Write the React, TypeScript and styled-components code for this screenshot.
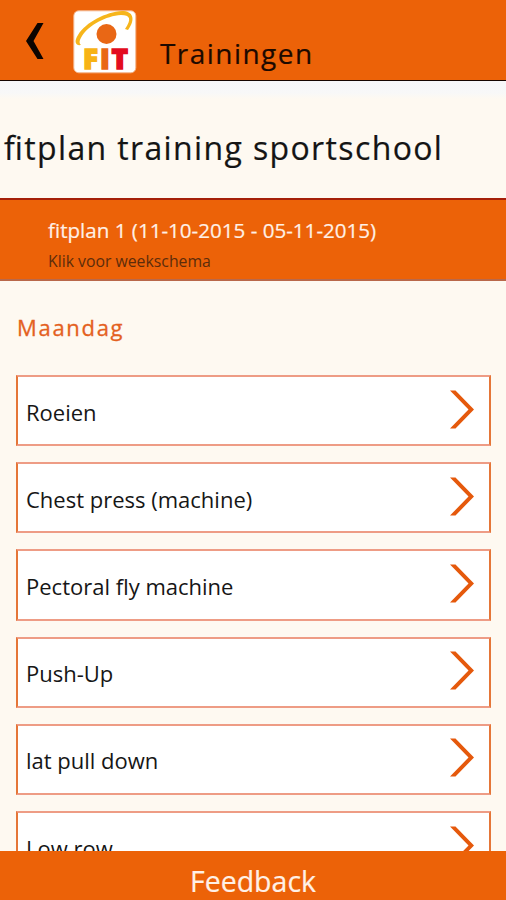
import React from "react";
import styled, { createGlobalStyle } from "styled-components";

const ORANGE = "#ec6208";

const GlobalStyle = createGlobalStyle`
  *, *::before, *::after { box-sizing: border-box; }
  body { margin: 0; background: #fef9f1; font-family: "Open Sans", "Noto Sans", sans-serif; }
`;

const Screen = styled.div`
  display: flex;
  flex-direction: column;
  height: 900px;
  overflow: hidden;
  background: #fef9f1;
`;

const Header = styled.header`
  display: flex;
  align-items: flex-start;
  flex: none;
  height: 81px;
  padding-left: 25px;
  background: ${ORANGE};
  border-bottom: 1.5px solid #160500;
`;

const BackButton = styled.button`
  display: flex;
  width: 48px;
  padding: 22px 0 0;
  border: 0;
  background: none;
`;

const Logo = styled.svg`
  flex: none;
  margin-top: 10px;
  overflow: visible;
`;

const LogoLetter = styled.text`
  font: 800 28px "Open Sans", sans-serif;
  stroke-width: 1.4;
`;

const HeaderTitle = styled.h1`
  margin: 34px 0 0 23px;
  font-size: 28px;
  line-height: 38px;
  font-weight: 400;
  letter-spacing: 1.45px;
  color: #1c0900;
  -webkit-text-stroke: 0.2px #1c0900;
`;

const Content = styled.main`
  flex: 1;
  min-height: 0;
  overflow: hidden;
`;

const PlanTitle = styled.h2`
  height: 117px;
  margin: 0;
  padding: 45px 0 0 4px;
  background: linear-gradient(#f7f7f9 0, #f8f8f8 12px, #fef9f1 18px);
  font-size: 32px;
  line-height: 44px;
  font-weight: 400;
  letter-spacing: 1.37px;
  font-feature-settings: "liga" 1;
  white-space: nowrap;
  color: #141414;
  -webkit-text-stroke: 0.2px #141414;
`;

const PlanBar = styled.section`
  height: 83px;
  padding: 15px 48px 0;
  background: ${ORANGE};
  border-top: 2px solid #a51f08;
  border-bottom: 2px solid #b9684a;
`;

const PlanName = styled.div`
  font-size: 20.6px;
  line-height: 30px;
  white-space: nowrap;
  color: #fff0e6;
  -webkit-text-stroke: 0.2px #fff0e6;
`;

const PlanHint = styled.div`
  margin-top: 5px;
  font-size: 15.8px;
  line-height: 22px;
  color: #5c2c0b;
`;

const Day = styled.h3`
  margin: 31px 0 33px 17px;
  font-size: 22px;
  line-height: 30px;
  font-weight: 400;
  letter-spacing: 1.7px;
  color: #e4611f;
  -webkit-text-stroke: 0.3px #e4611f;
`;

const List = styled.div`
  display: flex;
  flex-direction: column;
  gap: 16px;
  padding: 0 15px 0 16px;
`;

const Row = styled.div`
  display: flex;
  align-items: center;
  justify-content: space-between;
  flex: none;
  height: 71.2px;
  padding: 0 15px 0 8px;
  background: #fff;
  border: 2px solid #e57638;
  border-top-color: #ee9c85;
  border-bottom-color: #ee9c85;
`;

const RowLabel = styled.span`
  padding-top: 2px;
  font-size: 22px;
  line-height: 30px;
  color: #161616;
`;

const Chevron = styled.svg`
  flex: none;
  margin-bottom: 3px;
`;

const Footer = styled.footer`
  flex: none;
  height: 49px;
  padding-top: 10px;
  background: ${ORANGE};
  text-align: center;
  font-size: 28.5px;
  line-height: 40px;
  color: #fff0e6;
  -webkit-text-stroke: 0.2px #fff0e6;
`;

const exercises = ["Roeien", "Chest press (machine)", "Pectoral fly machine", "Push-Up", "lat pull down", "Low row"];

export default function App() {
  return (
    <Screen>
      <GlobalStyle />
      <Header>
        <BackButton aria-label="Terug">
          <svg width="20" height="38" viewBox="0 0 20 38">
            <path d="M12.5 1H18.5L8.5 19L18.5 37H12.5L1 19Z" fill="#0c0400" />
          </svg>
        </BackButton>
        <Logo width="64" height="64" viewBox="0 0 64 64">
          <rect x="0.8" y="0.8" width="62" height="62" rx="5" fill="#fff" stroke="#f3b58c" />
          <path
            d="M8 35C2 36 1 31 5 25C13 12 33 2 49 1C60 1 63 9 55 20L52 19C59 9 57 5 48 5C33 6 16 15 9 26C6 31 6 33 8 35Z"
            fill="#f6b51b"
          />
          <circle cx="33.5" cy="24" r="10" fill="#e96715" />
          <LogoLetter x="10" y="58.5" fill="#f7b315" stroke="#f7b315">F</LogoLetter>
          <LogoLetter x="27" y="58.5" fill="#e96715" stroke="#e96715">I</LogoLetter>
          <LogoLetter x="38.5" y="58.5" fill="#e30b20" stroke="#e30b20">T</LogoLetter>
        </Logo>
        <HeaderTitle>Trainingen</HeaderTitle>
      </Header>
      <Content>
        <PlanTitle>fitplan training sportschool</PlanTitle>
        <PlanBar>
          <PlanName>fitplan 1 (11-10-2015 - 05-11-2015)</PlanName>
          <PlanHint>Klik voor weekschema</PlanHint>
        </PlanBar>
        <Day>Maandag</Day>
        <List>
          {exercises.map((name) => (
            <Row key={name}>
              <RowLabel>{name}</RowLabel>
              <Chevron width="24" height="39" viewBox="0 0 24 39">
                <path d="M0 0.5H5.5L24 19.5L5.5 38.5H0L18.5 19.5Z" fill="#e5590c" />
              </Chevron>
            </Row>
          ))}
        </List>
      </Content>
      <Footer>Feedback</Footer>
    </Screen>
  );
}
